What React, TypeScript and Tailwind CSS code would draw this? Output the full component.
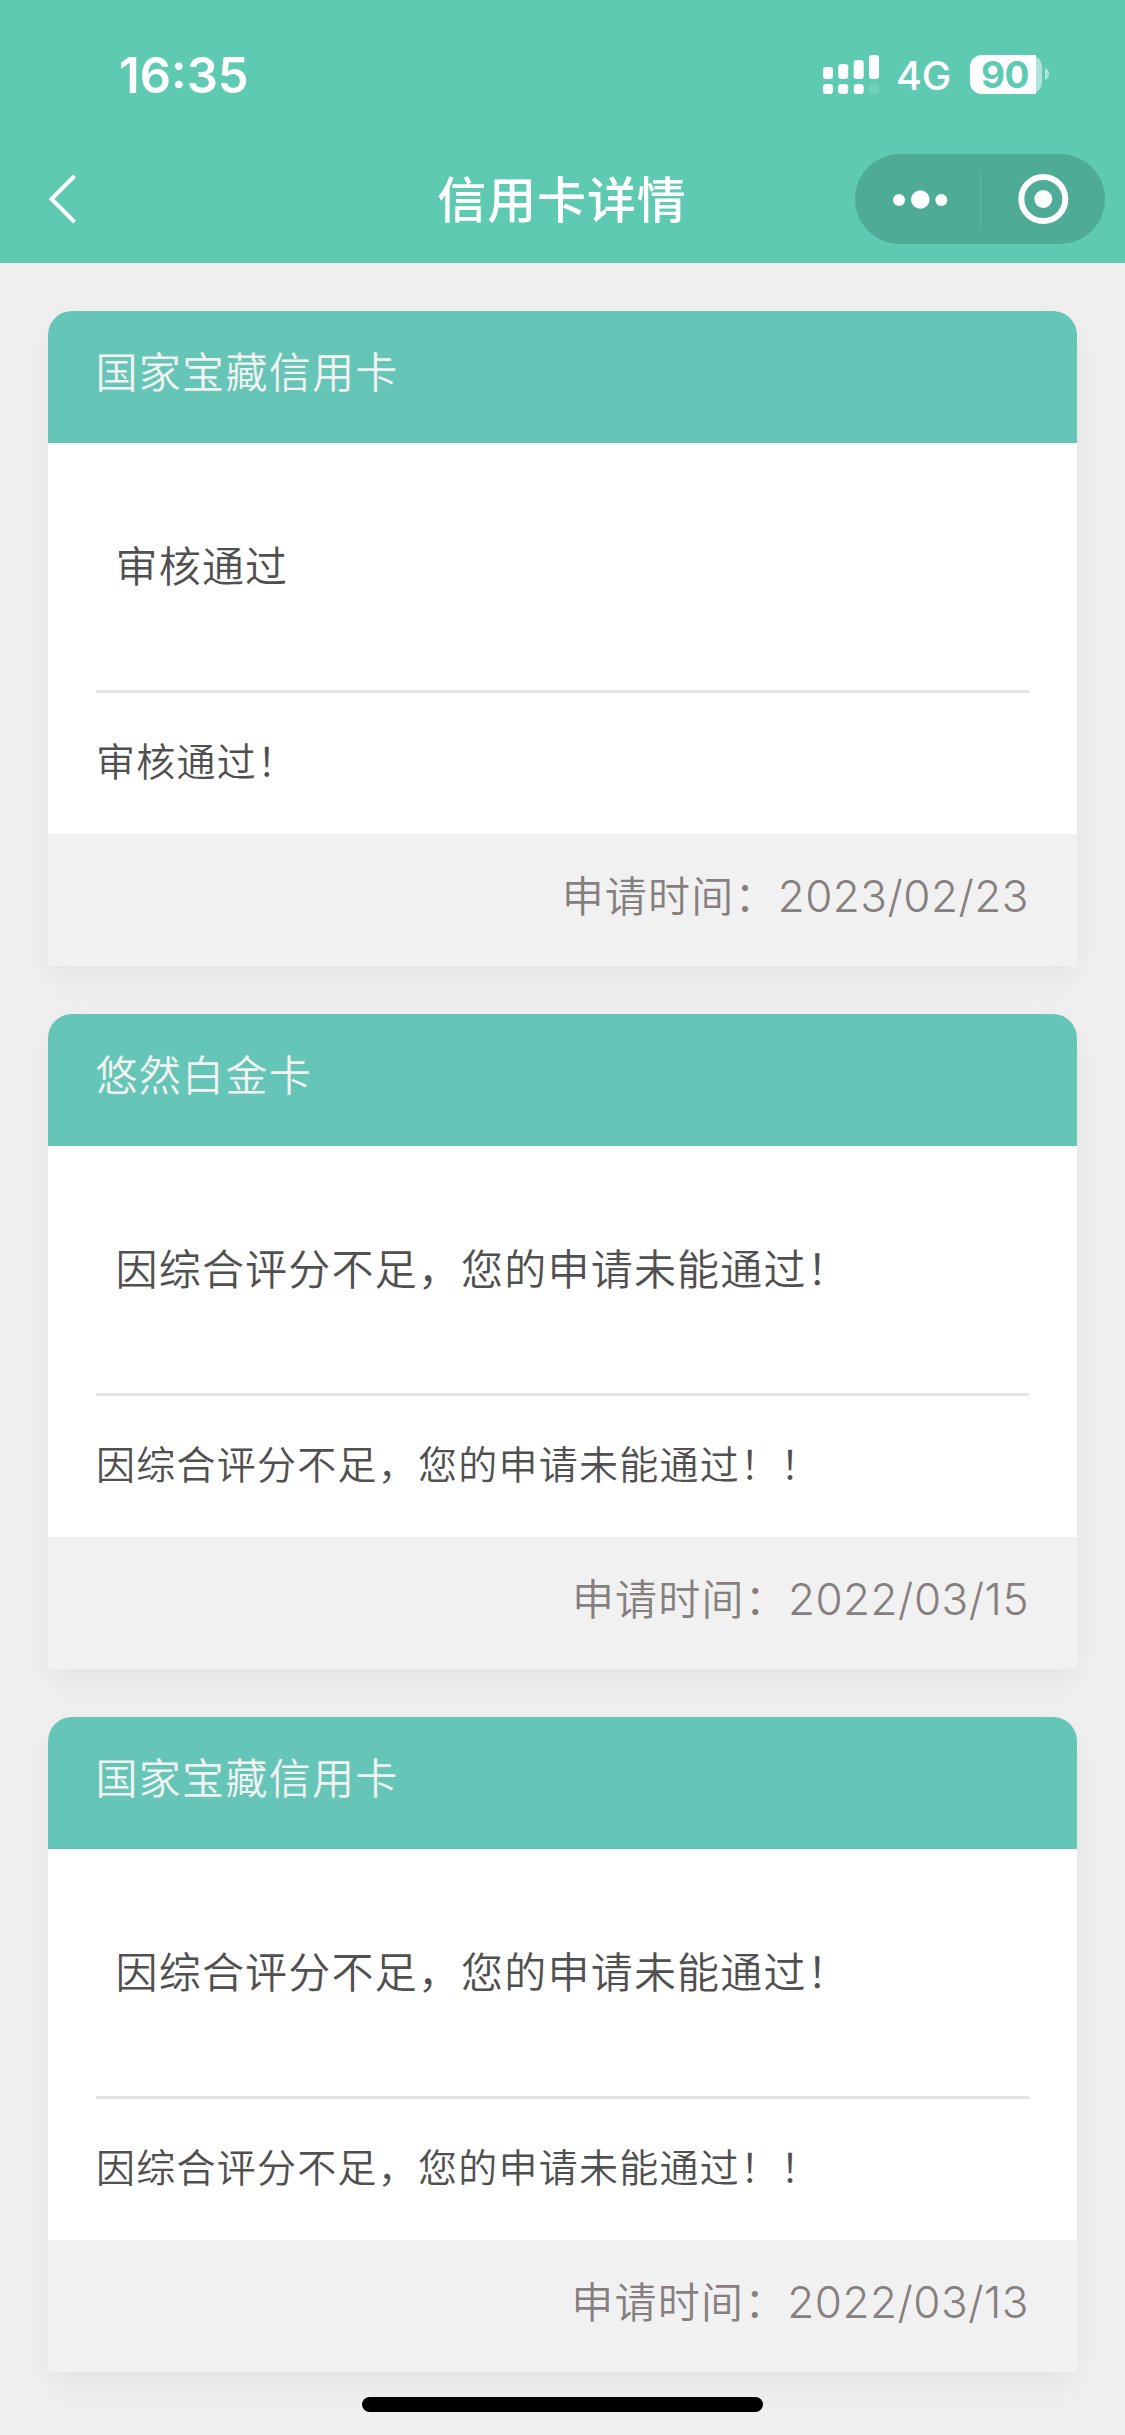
type Application = {
  card: string;
  status: string;
  detail: string;
  date: string;
};

const applications: Application[] = [
  { card: "国家宝藏信用卡", status: "审核通过", detail: "审核通过！", date: "2023/02/23" },
  {
    card: "悠然白金卡",
    status: "因综合评分不足，您的申请未能通过！",
    detail: "因综合评分不足，您的申请未能通过！！",
    date: "2022/03/15",
  },
  {
    card: "国家宝藏信用卡",
    status: "因综合评分不足，您的申请未能通过！",
    detail: "因综合评分不足，您的申请未能通过！！",
    date: "2022/03/13",
  },
];

function StatusIcons() {
  return (
    <div className="flex h-[40px] items-center">
      <svg width="56" height="40" viewBox="0 0 56 40" fill="white">
        <rect x="0" y="13" width="10" height="12" rx="3.2" />
        <rect x="15.2" y="10" width="10" height="15" rx="3.2" />
        <rect x="30.7" y="6" width="10" height="19" rx="3.2" />
        <rect x="46" y="1" width="10" height="24" rx="3.2" />
        <rect x="0" y="30" width="10" height="10" rx="3.2" />
        <rect x="15.2" y="30" width="10" height="10" rx="3.2" />
        <rect x="30.7" y="30" width="10" height="10" rx="3.2" />
        <rect x="46" y="30" width="10" height="10" rx="3.2" opacity="0.13" />
      </svg>
      <span className="ml-[17px] w-[55px] whitespace-nowrap pt-[4px] text-[39.5px] leading-[40px] font-[450] tracking-[-0.2px]">4G</span>
      <div className="ml-[19px] flex h-[39px] w-[72px] rounded-[12px] bg-white/50">
        <div className="flex h-[39px] w-[66px] items-center justify-center rounded-l-[12px] bg-white pl-[4px] text-[37px] leading-[39px] font-bold tracking-[-0.5px] text-[#5dcab1]">
          90
        </div>
      </div>
      <svg className="ml-[3px]" width="4" height="12" viewBox="0 0 4 12" fill="white" opacity="0.5">
        <path d="M0 0C2.6 1 4 3.300 4 6S2.600 11 0 12Z" />
      </svg>
    </div>
  );
}

function Capsule() {
  return (
    <div className="flex h-[90px] w-[250px] items-center rounded-full bg-[#4eab96]">
      <svg width="125" height="90" viewBox="0 0 125 90" fill="white">
        <circle cx="44" cy="46" r="6" />
        <circle cx="65.300" cy="45.500" r="9.300" />
        <circle cx="86.300" cy="46" r="6" />
      </svg>
      <div className="h-[56px] w-px bg-[#66b8a5]" />
      <svg width="124" height="90" viewBox="0 0 124 90" fill="white">
        <circle cx="62.300" cy="45" r="22" fill="none" stroke="white" strokeWidth="6" />
        <circle cx="62.300" cy="45" r="9" />
      </svg>
    </div>
  );
}

function ApplicationCard({ card, status, detail, date }: Application) {
  return (
    <section className="h-[655px] rounded-t-[24px] bg-white shadow-[0_12px_36px_rgba(0,0,0,0.06)]">
      <h2 className="h-[131.5px] rounded-t-[24px] bg-[#65c5b6] px-[47.5px] pt-[32px] text-[42px] leading-[60px] tracking-[1.3px] text-[#f2f2f2]">
        {card}
      </h2>
      <div className="h-[391.5px] px-[48px] text-[#505050]">
        <p className="h-[247.5px] pt-[94px] pl-[19.5px] text-[42px] leading-[60px] tracking-[1.2px]">{status}</p>
        <div className="h-[3px] bg-[#e4e4e4]" />
        <p className="pt-[39px] text-[39px] leading-[60px] tracking-[1.25px]">{detail}</p>
      </div>
      <div className="flex h-[132px] items-start justify-end bg-[#f1f1f1] px-[48px] pt-[33px] text-[42px] leading-[60px] tracking-[1.2px] text-[#857f80]">
        <span>申请时间：</span>
        <span className="-mt-px text-[44px] tracking-[0.5px]">{date}</span>
      </div>
    </section>
  );
}

export default function App() {
  return (
    <div className="h-[2435px] w-[1125px] overflow-hidden bg-[#f0f0f0] font-['Inter','Noto_Sans_CJK_SC',sans-serif] font-[350]">
      <header className="h-[263px] bg-[#5dcab1] text-white">
        <div className="flex h-[154px] items-start justify-between pt-[54px] pr-[76px] pl-[119px] font-normal">
          <time className="pt-[2px] text-[49px] leading-[40px] font-semibold">16:35</time>
          <StatusIcons />
        </div>
        <div className="grid h-[90px] grid-cols-[1fr_auto_1fr] items-center pr-[20px]">
          <svg className="ml-[48px]" width="30" height="50" viewBox="0 0 30 50" fill="none" stroke="white" strokeWidth="4">
            <path d="M26.500 2L3.500 25L26.500 48" />
          </svg>
          <h1 className="pt-[3px] pl-[19px] text-[49px] leading-[60px] font-medium tracking-[0.9px]">信用卡详情</h1>
          <div className="justify-self-end">
            <Capsule />
          </div>
        </div>
      </header>
      <main className="flex flex-col gap-[48px] px-[48px] pt-[48px]">
        {applications.map((item) => (
          <ApplicationCard key={item.date} {...item} />
        ))}
      </main>
      <div className="relative mx-auto mt-[25px] h-[15px] w-[401px] rounded-full bg-black" />
    </div>
  );
}
